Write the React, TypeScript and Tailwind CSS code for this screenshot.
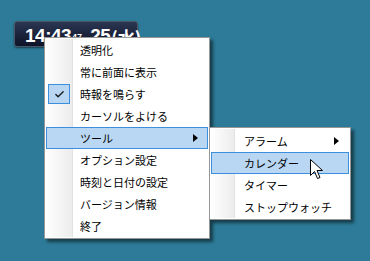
import { Check } from 'lucide-react'

const jp = '"Noto Sans CJK JP", "Noto Sans", sans-serif'
const latin = '"Liberation Sans", sans-serif'

const mainItems = ['透明化', '常に前面に表示', '時報を鳴らす', 'カーソルをよける', 'ツール', 'オプション設定', '時刻と日付の設定', 'バージョン情報', '終了']
const subItems = ['アラーム', 'カレンダー', 'タイマー', 'ストップウォッチ']

function Arrow() {
  return (
    <svg width="5" height="8" viewBox="0 0 5 8" className="ml-auto mr-[10px] shrink-0">
      <path d="M0 0 L5 4 L0 8 Z" fill="#000" />
    </svg>
  )
}

function Cursor() {
  return (
    <svg width="14" height="22" viewBox="0 0 14 22" className="absolute left-[310px] top-[159px]">
      <path d="M0.5 0.5 L0.5 16.5 L4.5 12.5 L7.5 19.5 L10 18.5 L7 11.5 L12.5 11.5 Z" fill="#fff" stroke="#000" strokeWidth="1" />
    </svg>
  )
}

function MenuItem({ label, active, checked, arrow, gutter }: { label: string; active?: boolean; checked?: boolean; arrow?: boolean; gutter: string }) {
  return (
    <div
      className={`h-[22px] mx-[1px] flex items-center text-[11px] text-black ${active ? 'bg-[#b9d7f3] outline outline-1 -outline-offset-1 outline-[#3c8fdc]' : ''}`}
    >
      <div className={`${gutter} h-full flex items-center pl-[2px]`}>
        {checked && (
          <div className="w-[22px] h-[20px] bg-[#b9d7f3] border border-[#3c8fdc] flex items-center justify-center">
            <Check size={11} strokeWidth={3} color="#1b1b1b" />
          </div>
        )}
      </div>
      <span>{label}</span>
      {arrow && <Arrow />}
    </div>
  )
}

export default function App() {
  return (
    <div className="relative w-[370px] h-[261px] bg-[#2d7b98] overflow-hidden" style={{ fontFamily: jp }}>
      {/* clock widget */}
      <div className="absolute left-[14px] top-[21px] w-[124px] h-[26px] rounded-[3px] border border-[#4a5668] bg-gradient-to-b from-[#2c3652] to-[#0e1428] flex items-end pl-[10px] pb-[1px] text-white font-bold leading-none shadow-[0_1px_2px_rgba(0,0,0,0.5)]">
        <span className="text-[19px] tracking-[-0.5px]" style={{ fontFamily: latin }}>14:43</span>
        <span className="text-[9px] mb-[3px] ml-[1px]" style={{ fontFamily: latin }}>47</span>
        <span className="text-[19px] ml-[8px] tracking-[-0.5px]" style={{ fontFamily: latin }}>25</span>
        <span className="text-[17px] ml-[1px]">(水)</span>
      </div>

      {/* main menu */}
      <div className="absolute left-[44px] top-[37px] w-[166px] bg-white border border-[#979797] py-[1px] shadow-[3px_3px_3px_rgba(0,0,0,0.5)]">
        <div className="absolute left-[1px] top-[1px] bottom-[1px] w-[27px] bg-gradient-to-r from-white to-[#ececec] border-r border-[#e2e2e2]" />
        <div className="relative flex flex-col">
          {mainItems.map((l, i) => (
            <MenuItem key={l} label={l} gutter="w-[34px]" active={i === 4} checked={i === 2} arrow={i === 4} />
          ))}
        </div>
      </div>

      {/* sub menu */}
      <div className="absolute left-[209px] top-[127px] w-[142px] bg-white border border-[#979797] pt-[2px] pb-[1px] shadow-[3px_3px_3px_rgba(0,0,0,0.5)]">
        <div className="absolute left-[1px] top-[1px] bottom-[1px] w-[24px] bg-gradient-to-r from-white to-[#ececec] border-r border-[#e2e2e2]" />
        <div className="relative flex flex-col">
          {subItems.map((l, i) => (
            <MenuItem key={l} label={l} gutter="w-[33px]" active={i === 1} arrow={i === 0} />
          ))}
        </div>
      </div>

      <Cursor />
    </div>
  )
}
